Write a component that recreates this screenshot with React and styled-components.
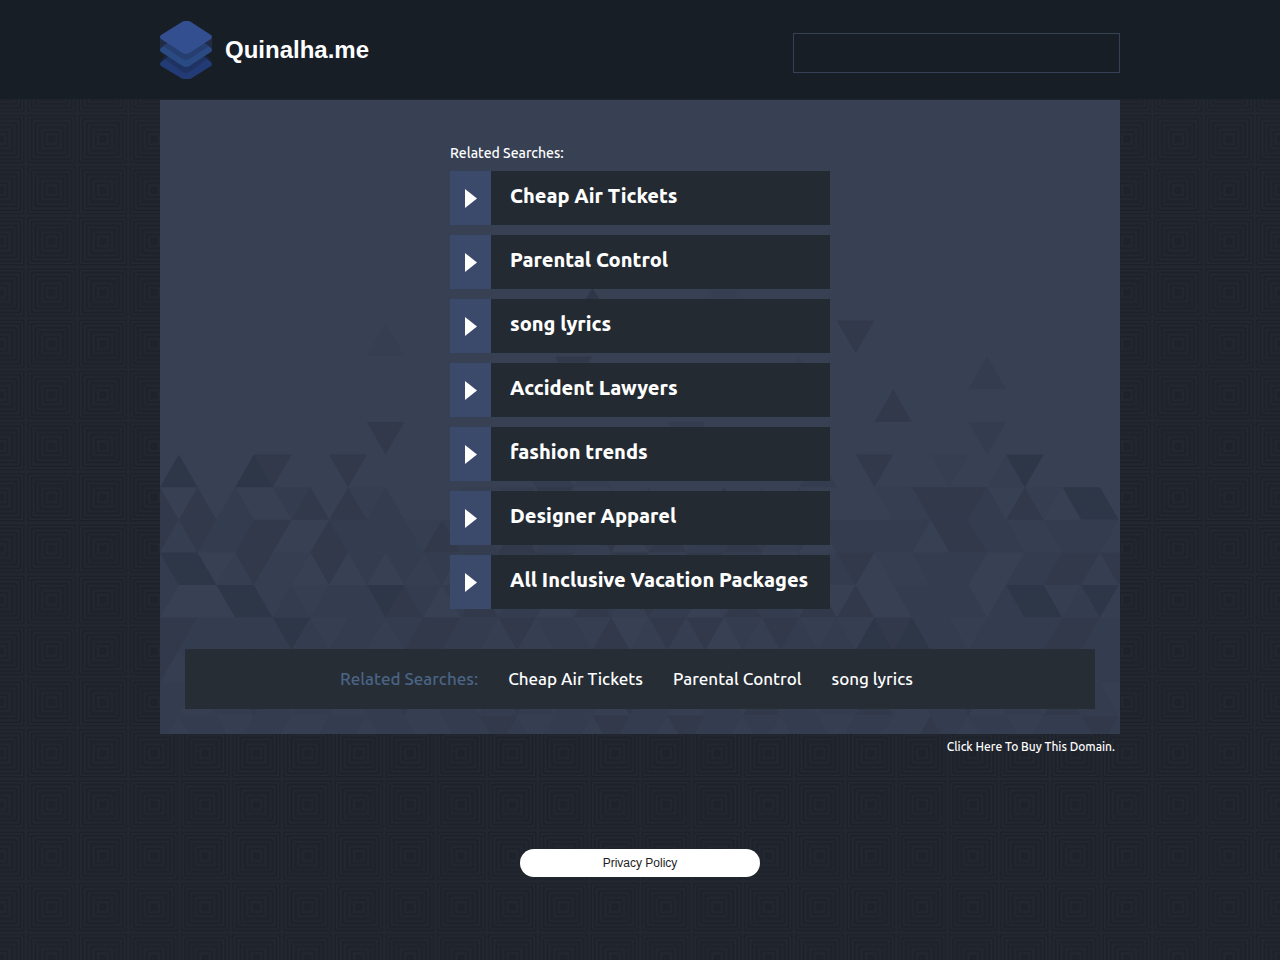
import React from "react";
import styled, { createGlobalStyle } from "styled-components";

const rings = [
  [23, "1c2028", 1],
  [22, "252933", 1],
  [20, "1c2028", 1],
  [18, "242832", 1],
  [16, "1c2028", 1],
  [14, "242832", 1],
  [12, "1c2028", 1],
  [9, "242832", 1],
  [7, "1c2028", 1],
  [5, "252933", 1],
  [2, "1c2029", 1],
]
  .map(
    ([half, color, width]) =>
      `<rect x='${25.6 - half}' y='${25.6 - half}' width='${half * 2}' height='${half * 2}' stroke='%23${color}' stroke-width='${width}'/>`
  )
  .join("");

const tile =
  "data:image/svg+xml," +
  `<svg xmlns='http://www.w3.org/2000/svg' width='256' height='256'><defs><pattern id='p' width='51.2' height='51.2' patternUnits='userSpaceOnUse'><rect width='52' height='52' fill='%2320242d'/><g fill='none'>${rings}<rect width='51.2' height='51.2' stroke='%23232731' stroke-width='2'/></g></pattern></defs><rect width='256' height='256' fill='url(%23p)'/></svg>`
    .replace(/</g, "%3C")
    .replace(/>/g, "%3E");

const GlobalStyle = createGlobalStyle`
  * { box-sizing: border-box; }
  body {
    margin: 0;
    min-height: 100vh;
    color: #fff;
    background: #20242d url("${tile}") 26px 11px / 256px 256px;
    font-family: Ubuntu, "Noto Sans", sans-serif;
    font-weight: 500;
  }
  a { color: inherit; text-decoration: none; }
`;

const Header = styled.header`
  background: #171e26;
  margin-bottom: 1px;
`;

const Container = styled.div`
  max-width: 960px;
  margin: 0 auto;
`;

const HeaderRow = styled(Container)`
  display: flex;
  align-items: center;
  justify-content: space-between;
  min-height: 99px;
`;

const Brand = styled.a`
  display: flex;
  align-items: center;
  gap: 13px;
`;

const LogoMark = styled.svg`
  width: 52px;
  height: 58px;
`;

const SiteName = styled.h1`
  margin: 0;
  font: bold 24px/28px "Liberation Sans", Arial, sans-serif;
`;

const SearchBox = styled.input`
  width: 327px;
  height: 40px;
  margin-top: 7px;
  padding: 0 12px;
  border: 1px solid #364155;
  border-radius: 0;
  background: transparent;
  color: #fff;
  font: inherit;
  outline: none;
`;

const Panel = styled.main`
  position: relative;
  isolation: isolate;
  background: #384154;
  padding: 42px 25px 25px;
`;

const Mosaic = styled.svg`
  position: absolute;
  inset: 0;
  width: 100%;
  height: 100%;
  z-index: -1;
`;

const Results = styled.section`
  max-width: 380px;
  margin: 0 auto 40px;
`;

const ResultsTitle = styled.h2`
  margin: 0 0 7px;
  font-size: 14px;
  line-height: 22px;
  font-weight: inherit;
`;

const ResultList = styled.ul`
  display: grid;
  gap: 10px;
  margin: 0;
  padding: 0;
  list-style: none;
`;

const ResultLink = styled.a`
  display: flex;
  height: 54px;
  background: #232a32;
  font-size: 20px;
  line-height: 50px;
  font-weight: 800;
  white-space: nowrap;
`;

const ArrowCell = styled.span`
  display: flex;
  align-items: center;
  justify-content: center;
  flex: 0 0 41px;
  margin-right: 19px;
  background: #3b496b;
`;

const Arrow = styled.svg`
  width: 12px;
  height: 20px;
`;

const RelatedBar = styled.nav`
  display: flex;
  align-items: center;
  gap: 30px;
  min-height: 60px;
  padding-left: 155px;
  background: #262d35;
  font-size: 17px;
  line-height: 24px;
  white-space: nowrap;
`;

const RelatedLabel = styled.span`
  color: #4b6485;
`;

const BuyRow = styled(Container)`
  padding: 3px 5px 0 0;
  text-align: right;
  font-size: 12px;
  line-height: 20px;
`;

const Footer = styled.footer`
  display: flex;
  justify-content: center;
  padding: 92px 0 83px;
`;

const PolicyLink = styled.a`
  && { color: #222; }
  width: 240px;
  border-radius: 14px;
  background: #fff;
  font: 12px/28px "Liberation Sans", Arial, sans-serif;
  text-align: center;
`;

const searches = [
  "Cheap Air Tickets",
  "Parental Control",
  "song lyrics",
  "Accident Lawyers",
  "fashion trends",
  "Designer Apparel",
  "All Inclusive Vacation Packages",
];

const HALF = 18.8;
const ROW = 32.6;
const TOP = 354.6;
const shades = ["#384154", "#363e51", "#343c4f", "#31394b", "#2e3748"];

// One digit for each triangle of a row, from left to right, giving its shade.
const mosaicRows = [
  "0400043000300000000022010000000000020030001001400000",
  "3030200230312000010203001020003010200001133320310440",
  "3132233003222213221312213023122321202222203322112221",
  "2440131103020212022313012321231220212301122200223313",
  "2000441212224320231220132132201322130300222202441241",
  "3322222421221233221312213013130213212143422122223322",
  "3122122122312212231221223122123122131221322122122122",
  "2212232122122312212321221322122132212232122312213221",
  "2122122112212211223212213221322121221221132122122232",
];

const strays = [
  { x: 12, y: 223.5, up: true, shade: 1 },
  { x: 23, y: 187.5, up: true, shade: 4 },
  { x: 30, y: 187.5, up: false, shade: 1 },
  { x: 37, y: 220.6, up: false, shade: 3 },
  { x: 22, y: 256.4, up: false, shade: 3 },
  { x: 34, y: 256.4, up: true, shade: 1 },
  { x: 44, y: 256.6, up: true, shade: 2 },
  { x: 39, y: 289.4, up: true, shade: 3 },
  { x: 12, y: 322, up: false, shade: 3 },
  { x: 28, y: 322, up: false, shade: 2 },
  { x: 44, y: 322, up: false, shade: 2 },
];

function trianglePoints(center, y, up) {
  const x = center * HALF;
  const base = up ? y + ROW : y;
  const tip = up ? y : y + ROW;
  return `${x - HALF},${base} ${x + HALF},${base} ${x},${tip}`;
}

function MosaicArt() {
  return (
    <Mosaic viewBox="0 0 960 634" preserveAspectRatio="xMidYMax slice" aria-hidden="true">
      {strays.map((t) => (
        <polygon key={`${t.x}-${t.y}`} points={trianglePoints(t.x, t.y, t.up)} fill={shades[t.shade]} />
      ))}
      {mosaicRows.map((row, r) =>
        [...row].map((shade, c) =>
          shade === "0" ? null : (
            <polygon
              key={`${r}-${c}`}
              points={trianglePoints(c, TOP + r * ROW, (r + c) % 2 === 1)}
              fill={shades[shade]}
            />
          )
        )
      )}
    </Mosaic>
  );
}

function Logo() {
  const sheet = "M22 1 Q23 0 25 0 H28 Q30 0 31 1 L51 14 Q53 16 51 18 L31 31 Q26 35 21 31 L1 18 Q-1 16 1 14 Z";
  return (
    <LogoMark viewBox="0 0 52 58" aria-hidden="true">
      <path d="M0 17 H52 V28 H0 Z" fill="#202b44" />
      <path d="M0 40 L4 35 H48 L52 40 Z" fill="#1a2338" />
      <path d="M1 41 L8 36 H44 L51 41 Q53 43 51 45 L32 57 Q31 58 29 58 H24 Q22 58 21 57 L1 45 Q-1 43 1 41 Z" fill="#223b75" />
      <path d="M5 38 L8 36 H44 L47 38 L31 50 Q26 54 21 50 Z" fill="#1f3362" />
      <path d="M1 27 L8 22 H44 L51 27 Q53 29 51 31 L31 44 Q26 48 21 44 L1 31 Q-1 29 1 27 Z" fill="#2a4a84" />
      <path d="M3 25 L8 22 H44 L49 25 L31 37 Q26 41 21 37 Z" fill="#263f70" />
      <path d={sheet} fill="#334f8f" />
    </LogoMark>
  );
}

export default function App() {
  return (
    <>
      <GlobalStyle />
      <Header>
        <HeaderRow>
          <Brand href="#">
            <Logo />
            <SiteName>Quinalha.me</SiteName>
          </Brand>
          <SearchBox type="text" aria-label="Search" />
        </HeaderRow>
      </Header>
      <Container>
        <Panel>
          <MosaicArt />
          <Results>
            <ResultsTitle>Related Searches:</ResultsTitle>
            <ResultList>
              {searches.map((label) => (
                <li key={label}>
                  <ResultLink href="#">
                    <ArrowCell>
                      <Arrow viewBox="0 0 12 20" aria-hidden="true">
                        <path d="M0 1 L12 10.500 L0 20 Z" fill="#fff" />
                      </Arrow>
                    </ArrowCell>
                    {label}
                  </ResultLink>
                </li>
              ))}
            </ResultList>
          </Results>
          <RelatedBar aria-label="Related searches">
            <RelatedLabel>Related Searches:</RelatedLabel>
            {searches.slice(0, 3).map((label) => (
              <a key={label} href="#">{label}</a>
            ))}
          </RelatedBar>
        </Panel>
      </Container>
      <BuyRow>
        <a href="#">Click Here To Buy This Domain.</a>
      </BuyRow>
      <Footer>
        <PolicyLink href="#">Privacy Policy</PolicyLink>
      </Footer>
    </>
  );
}
